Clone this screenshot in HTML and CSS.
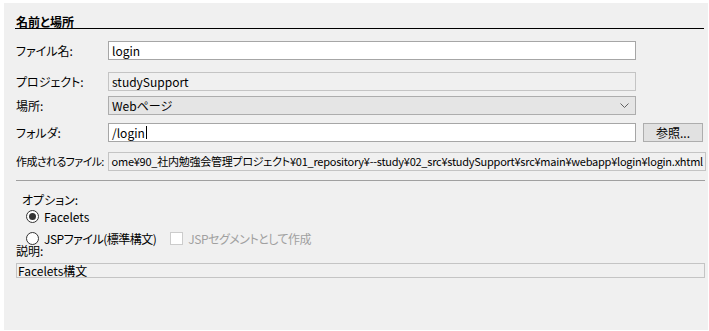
FILE: index.html
```html
<!DOCTYPE html>
<html lang="ja">
<head>
    <meta charset="UTF-8">
    <title>名前と場所</title>
    <link rel="stylesheet" href="styles.css">
</head>
<body>
    <main class="dialog">
        <div class="header">
            <h2>名前と場所</h2>
        </div>

        <div class="row first">
            <label class="label">ファイル名:</label>
            <div class="field input narrow">login</div>
        </div>
        <div class="row second">
            <label class="label">プロジェクト:</label>
            <div class="field input readonly narrow">studySupport</div>
        </div>
        <div class="row third">
            <label class="label">場所:</label>
            <div class="field select narrow">
                <span>Webページ</span>
                <svg class="chevron" width="9" height="5" viewBox="0 0 9 5">
                    <path d="M0.5 0.5 L4.5 4.5 L8.5 0.5" fill="none" stroke="#606060" stroke-width="1"/>
                </svg>
            </div>
        </div>
        <div class="row fourth">
            <label class="label">フォルダ:</label>
            <div class="field input">/login<span class="caret"></span></div>
            <button class="browse-btn">参照...</button>
        </div>
        <div class="row fifth">
            <label class="label squeeze">作成されるファイル:</label>
            <div class="field input readonly path">
                <span>ome¥90_社内勉強会管理プロジェクト¥01_repository¥--study¥02_src¥studySupport¥src¥main¥webapp¥login¥login.xhtml</span>
            </div>
        </div>

        <div class="separator"></div>

        <section class="options">
            <div class="options-title">オプション:</div>
            <div class="radio-row">
                <span class="radio checked"></span>
                <span>Facelets</span>
            </div>
            <div class="radio-row">
                <span class="radio"></span>
                <span class="tight">JSPファイル(標準構文)</span>
                <span class="checkbox"></span>
                <span class="disabled tight">JSPセグメントとして作成</span>
            </div>
        </section>

        <div class="desc-label">説明:</div>
        <div class="desc-box">Facelets構文</div>
    </main>
</body>
</html>
```

FILE: styles.css
```css
:root {
    --panel: #f0f0f0;
    --border: #a6a6a6;
    --border-light: #c4c4c4;
    --text: #000000;
    --disabled: #a0a0a0;
}

* {
    margin: 0;
    padding: 0;
    box-sizing: border-box;
}

body {
    background-color: #ffffff;
    font-family: "Noto Sans CJK JP", "Noto Sans", sans-serif;
    font-feature-settings: "palt";
    font-size: 12px;
    color: var(--text);
}

.dialog {
    margin: 3px 1px 1px 4px;
    height: 327px;
    background-color: var(--panel);
    overflow: hidden;
}

.header {
    margin: 0 4px 0 11px;
    padding: 12px 0 0 1px;
    border-bottom: 1px solid #000000;
}

.header h2 {
    font-size: 12px;
    font-weight: 700;
    line-height: 13px;
    text-decoration: underline;
    text-underline-offset: 1px;
}

.tight {
    letter-spacing: -0.5px;
}

.row {
    display: flex;
    align-items: center;
    margin: 0 2px 0 12px;
    height: 19px;
}

.row.first { margin-top: 12px; }
.row.second { margin-top: 12px; }
.row.third { margin-top: 5px; }
.row.fourth { margin-top: 8px; margin-right: 5px; }
.row.fifth { margin-top: 10px; }

.label {
    width: 92px;
    flex-shrink: 0;
    line-height: 19px;
    white-space: nowrap;
}

.label.squeeze {
    font-size: 11px;
    letter-spacing: -0.6px;
}

.field {
    flex: 1;
    min-width: 0;
    height: 19px;
    display: flex;
    align-items: center;
    padding: 0 3px;
    border: 1px solid var(--border);
    white-space: nowrap;
    line-height: 17px;
}

.field.narrow {
    margin-right: 70px;
}

.input {
    background-color: #ffffff;
}

.input.readonly {
    background-color: var(--panel);
    border-color: var(--border-light);
}

.path {
    justify-content: flex-end;
    overflow: hidden;
    padding: 0 2px;
    font-size: 11px;
    letter-spacing: -0.25px;
}

.path span {
    flex-shrink: 0;
}

.select {
    background-color: #e5e5e5;
    border-color: #adadad;
    justify-content: space-between;
    padding-right: 6px;
}

.caret {
    display: inline-block;
    width: 1px;
    height: 13px;
    margin-left: 1px;
    background-color: #000000;
}

.browse-btn {
    width: 60px;
    height: 19px;
    margin-left: 7px;
    background-color: #e1e1e1;
    border: 1px solid #adadad;
    font-family: inherit;
    font-size: 12px;
    color: var(--text);
}

.separator {
    margin: 9px 3px 0 12px;
    border-top: 1px solid #a0a0a0;
}

.options {
    padding-left: 18px;
}

.options-title {
    margin-top: 12px;
    line-height: 14px;
}

.radio-row {
    display: flex;
    align-items: center;
    height: 14px;
    margin: 2px 0 0 4px;
    white-space: nowrap;
}

.radio-row + .radio-row {
    margin-top: 8px;
}

.radio {
    width: 13px;
    height: 13px;
    margin-right: 5px;
    border: 1px solid #333333;
    border-radius: 50%;
    background-color: #ffffff;
    display: flex;
    align-items: center;
    justify-content: center;
}

.radio.checked::after {
    content: "";
    width: 7px;
    height: 7px;
    border-radius: 50%;
    background-color: #333333;
}

.checkbox {
    width: 13px;
    height: 13px;
    margin: 0 5px 0 14px;
    border: 1px solid #cccccc;
    background-color: #ffffff;
}

.disabled {
    color: var(--disabled);
}

.desc-label {
    margin: 0 0 0 12px;
    line-height: 12px;
}

.desc-box {
    margin: 6px 3px 0 12px;
    height: 15px;
    padding-left: 1px;
    line-height: 13px;
    border: 1px solid var(--border-light);
    background-color: var(--panel);
}
```
